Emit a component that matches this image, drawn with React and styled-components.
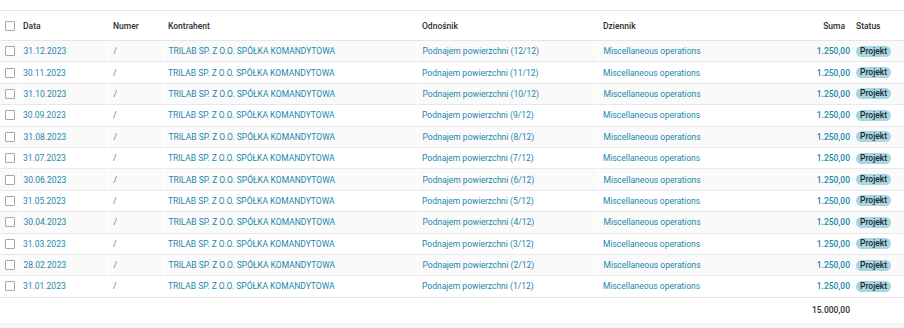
import React from "react";
import styled, { createGlobalStyle } from "styled-components";

const GlobalStyle = createGlobalStyle`
  html, body {
    margin: 0;
    padding: 0;
    background: #f4f4f6;
  }
  body {
    font-family: Roboto, "Liberation Sans", sans-serif;
    -webkit-font-smoothing: antialiased;
  }
`;

const Page = styled.div`
  width: 904px;
  height: 328px;
  background: #f4f4f6;
  overflow: hidden;
`;

const Sheet = styled.div`
  background: #fff;
  padding-top: 10px;
`;

const Table = styled.table`
  width: 904px;
  border-collapse: collapse;
  table-layout: fixed;
  font-size: 8.5px;
  border-top: 1px solid #e4e4e6;
`;

const HeadRow = styled.tr`
  height: 30px;
  box-shadow: 0 2px 3px rgba(0, 0, 0, 0.06);
`;

const Th = styled.th`
  text-align: ${(p) => (p.$right ? "right" : "left")};
  padding: 0 ${(p) => (p.$right ? "10px" : "5px")} 0 ${(p) => p.$pl || "5px"};
  font-weight: 500;
  color: #2b2f33;
  border-bottom: 1px solid #e6e6e8;
  white-space: nowrap;
`;

const Row = styled.tr`
  height: 21.4px;
  background: ${(p) => (p.$odd ? "#fafafa" : "#fff")};
  border-bottom: 1px solid #e8e8ea;
`;

const Td = styled.td`
  padding: 0 5px 0 ${(p) => p.$pl || "5px"};
  text-align: ${(p) => (p.$right ? "right" : "left")};
  color: ${(p) => (p.$dark ? "#2b2f33" : "#1b87ab")};
  font-weight: ${(p) => (p.$bold ? 500 : 400)};
  white-space: nowrap;
  overflow: hidden;
  border-left: ${(p) => (p.$sep ? "1px solid #ffffff" : "none")};
`;

const FootRow = styled.tr`
  height: 26px;
  background: #fff;
`;

const Total = styled.td`
  text-align: right;
  padding: 0 5px;
  font-weight: 500;
  color: #2b2f33;
`;

const Check = styled.span`
  display: block;
  width: 8px;
  height: 8px;
  border: 1px solid #a6a6a9;
  border-radius: 1px;
  background: #fff;
`;

const Badge = styled.span`
  display: inline-block;
  background: #a6d6e2;
  color: #1d2a30;
  font-weight: 500;
  font-size: 8.5px;
  line-height: 11px;
  padding: 0 4px;
  border-radius: 6px;
`;

const months = ["12", "11", "10", "09", "08", "07", "06", "05", "04", "03", "02", "01"];
const days = {
  "12": "31", "11": "30", "10": "31", "09": "30", "08": "31", "07": "31",
  "06": "30", "05": "31", "04": "30", "03": "31", "02": "28", "01": "31",
};

const rows = months.map((m, i) => ({
  date: `${days[m]}.${m}.2023`,
  ref: `Podnajem powierzchni (${12 - i}/12)`,
}));

export default function App() {
  return (
    <Page>
      <GlobalStyle />
      <Sheet>
        <Table>
          <colgroup>
            <col style={{ width: 18 }} />
            <col style={{ width: 90 }} />
            <col style={{ width: 55 }} />
            <col style={{ width: 254 }} />
            <col style={{ width: 181 }} />
            <col style={{ width: 200 }} />
            <col style={{ width: 57 }} />
            <col style={{ width: 49 }} />
          </colgroup>
          <thead>
            <HeadRow>
              <Th><Check /></Th>
              <Th>Data</Th>
              <Th>Numer</Th>
              <Th>Kontrahent</Th>
              <Th>Odnośnik</Th>
              <Th>Dziennik</Th>
              <Th $right>Suma</Th>
              <Th $pl="1px">Status</Th>
            </HeadRow>
          </thead>
          <tbody>
            {rows.map((r, i) => (
              <Row key={r.date} $odd={i % 2 === 0}>
                <Td><Check /></Td>
                <Td $sep={i % 2 === 0}>{r.date}</Td>
                <Td $sep={i % 2 === 0}>/</Td>
                <Td $sep={i % 2 === 0}>TRILAB SP. Z O.O. SPÓŁKA KOMANDYTOWA</Td>
                <Td $sep={i % 2 === 0}>{r.ref}</Td>
                <Td $sep={i % 2 === 0}>Miscellaneous operations</Td>
                <Td $right $bold>1.250,00</Td>
                <Td $pl="1px"><Badge>Projekt</Badge></Td>
              </Row>
            ))}
          </tbody>
          <tfoot>
            <FootRow>
              <td colSpan={6} />
              <Total>15.000,00</Total>
              <td />
            </FootRow>
          </tfoot>
        </Table>
      </Sheet>
    </Page>
  );
}
